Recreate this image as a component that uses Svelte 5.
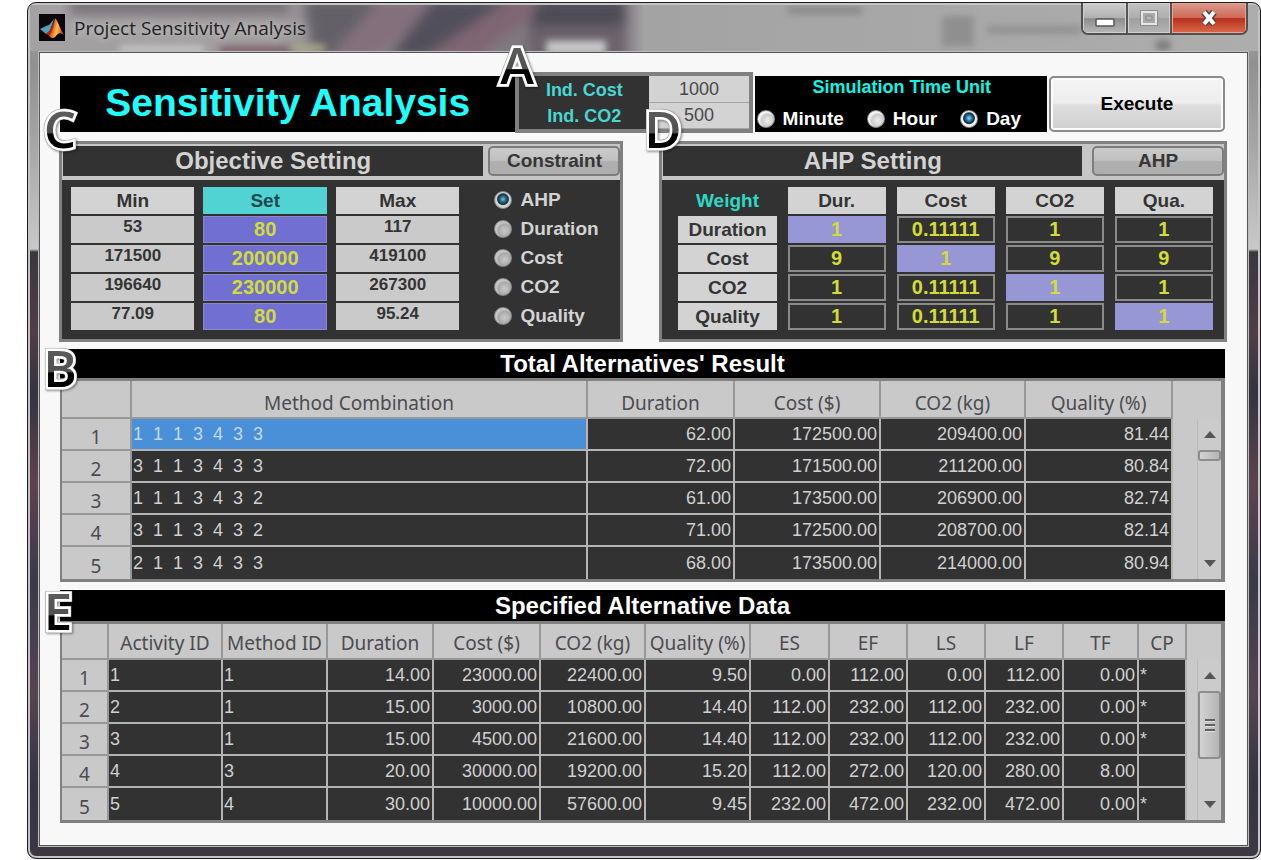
<script>
  let unit = $state('Day');
  let target = $state('AHP');
  let indCost = $state('1000');
  let indCo2 = $state('500');
  let selectedRow = $state(0);

  const units = ['Minute', 'Hour', 'Day'];
  const targets = ['AHP', 'Duration', 'Cost', 'CO2', 'Quality'];

  let objectives = $state([
    { name: 'Duration', min: '53', set: '80', max: '117' },
    { name: 'Cost', min: '171500', set: '200000', max: '419100' },
    { name: 'CO2', min: '196640', set: '230000', max: '267300' },
    { name: 'Quality', min: '77.09', set: '80', max: '95.24' }
  ]);

  const criteria = ['Dur.', 'Cost', 'CO2', 'Qua.'];
  let weights = $state([
    { name: 'Duration', values: ['1', '0.11111', '1', '1'] },
    { name: 'Cost', values: ['9', '1', '9', '9'] },
    { name: 'CO2', values: ['1', '0.11111', '1', '1'] },
    { name: 'Quality', values: ['1', '0.11111', '1', '1'] }
  ]);

  const resultColumns = [
    { title: 'Method Combination', width: 456 },
    { title: 'Duration', width: 147, num: true },
    { title: 'Cost ($)', width: 146, num: true },
    { title: 'CO2 (kg)', width: 145, num: true },
    { title: 'Quality (%)', width: 147, num: true }
  ];
  const results = [
    ['1  1  1  3  4  3  3', '62.00', '172500.00', '209400.00', '81.44'],
    ['3  1  1  3  4  3  3', '72.00', '171500.00', '211200.00', '80.84'],
    ['1  1  1  3  4  3  2', '61.00', '173500.00', '206900.00', '82.74'],
    ['3  1  1  3  4  3  2', '71.00', '172500.00', '208700.00', '82.14'],
    ['2  1  1  3  4  3  3', '68.00', '173500.00', '214000.00', '80.94']
  ];

  const detailColumns = [
    { title: 'Activity ID', width: 114 },
    { title: 'Method ID', width: 105 },
    { title: 'Duration', width: 106, num: true },
    { title: 'Cost ($)', width: 107, num: true },
    { title: 'CO2 (kg)', width: 105, num: true },
    { title: 'Quality (%)', width: 105, num: true },
    { title: 'ES', width: 79, num: true },
    { title: 'EF', width: 78, num: true },
    { title: 'LS', width: 78, num: true },
    { title: 'LF', width: 78, num: true },
    { title: 'TF', width: 75, num: true },
    { title: 'CP', width: 48 }
  ];
  const details = [
    ['1', '1', '14.00', '23000.00', '22400.00', '9.50', '0.00', '112.00', '0.00', '112.00', '0.00', '*'],
    ['2', '1', '15.00', '3000.00', '10800.00', '14.40', '112.00', '232.00', '112.00', '232.00', '0.00', '*'],
    ['3', '1', '15.00', '4500.00', '21600.00', '14.40', '112.00', '232.00', '112.00', '232.00', '0.00', '*'],
    ['4', '3', '20.00', '30000.00', '19200.00', '15.20', '112.00', '272.00', '120.00', '280.00', '8.00', ''],
    ['5', '4', '30.00', '10000.00', '57600.00', '9.45', '232.00', '472.00', '232.00', '472.00', '0.00', '*']
  ];
</script>

{#snippet callout(letter)}
  <svg class="callout callout-{letter.toLowerCase()}" width="48" height="54" viewBox="0 0 48 54">
    <defs>
      <linearGradient id="fill-{letter}" gradientUnits="userSpaceOnUse" x1="0" y1="8" x2="0" y2="46">
        <stop offset="0" stop-color="#5c5c5c" />
        <stop offset="0.6" stop-color="#505050" />
        <stop offset="0.63" stop-color="#000" />
      </linearGradient>
    </defs>
    <text class="shade" x="24" y="46" text-anchor="middle">{letter}</text>
    <text class="face" x="24" y="46" text-anchor="middle" fill="url(#fill-{letter})">{letter}</text>
  </svg>
{/snippet}

{#snippet scrollbar(tall)}
  <div class="scroll-area">
    <div class="scrollbar">
      <button class="arrow" aria-label="Scroll up">
        <svg width="12" height="7" viewBox="0 0 12 7"><path d="M0 7 6 0l6 7z" fill="#555" /></svg>
      </button>
      <div class="thumb" class:tall>
        {#if tall}
          <svg width="12" height="14" viewBox="0 0 12 14">
            <path d="M1 2h10M1 7h10M1 12h10" stroke="#606060" stroke-width="2" />
            <path d="M1 3.5h10M1 8.5h10M1 13.5h10" stroke="#ddd" />
          </svg>
        {/if}
      </div>
      <button class="arrow down" aria-label="Scroll down">
        <svg width="12" height="7" viewBox="0 0 12 7"><path d="M0 0h12L6 7z" fill="#555" /></svg>
      </button>
    </div>
  </div>
{/snippet}

{#snippet grid(columns, rows, headWidth, selectable)}
  <table class="grid">
    <colgroup>
      <col style:width="{headWidth}px" />
      {#each columns as c}<col style:width="{c.width}px" />{/each}
    </colgroup>
    <thead>
      <tr>
        <td></td>
        {#each columns as c}<th scope="col">{c.title}</th>{/each}
      </tr>
    </thead>
    <tbody>
      {#each rows as row, r}
        <tr>
          <th scope="row">{r + 1}</th>
          {#each row as cell, i}
            <td
              class:num={columns[i].num}
              class:selected={selectable && i === 0 && r === selectedRow}>{cell}</td>
          {/each}
        </tr>
      {/each}
    </tbody>
  </table>
{/snippet}

<div class="window">
  <svg class="glass" preserveAspectRatio="none" viewBox="0 0 1232 49" aria-hidden="true">
    <defs>
      <filter id="soft" x="-20%" y="-60%" width="140%" height="220%"><feGaussianBlur stdDeviation="6" /></filter>
      <filter id="softer" x="-20%" y="-60%" width="140%" height="220%"><feGaussianBlur stdDeviation="4" /></filter>
      <linearGradient id="base" x1="0" x2="1" y1="0" y2="0">
        <stop offset="0" stop-color="#a3a1a2" />
        <stop offset="0.2" stop-color="#a09c9e" />
        <stop offset="0.24" stop-color="#8b878b" />
        <stop offset="0.48" stop-color="#7a727a" />
        <stop offset="0.5" stop-color="#a3a3a3" />
        <stop offset="1" stop-color="#adadad" />
      </linearGradient>
    </defs>
    <rect width="1232" height="49" fill="url(#base)" />
    <g filter="url(#soft)">
      <rect x="40" y="-6" width="220" height="16" fill="#777076" />
      <path d="M275-5h90l-55 60h-25z" fill="#646068" />
      <path d="M350-5h70L345 55h-45z" fill="#83707c" />
      <path d="M405-5h85L440 55h-80z" fill="#514f5b" />
      <path d="M480-5h45L450 55h-55z" fill="#7f6672" />
      <path d="M510-5h86v30h-96z" fill="#4d4c57" />
      <path d="M500 22h95v32h-95z" fill="#6b626a" />
    </g>
    <g filter="url(#softer)">
      <rect x="190" y="44" width="80" height="8" fill="#7a5d69" />
      <rect x="90" y="43" width="85" height="8" fill="#c6c4c5" />
      <rect x="518" y="38" width="60" height="14" fill="#c9c9c9" />
      <rect x="262" y="42" width="34" height="8" fill="#a9ab8a" />
      <rect x="760" y="2" width="75" height="7" fill="#858585" />
      <rect x="915" y="12" width="32" height="32" fill="#8f8f8f" />
      <rect x="960" y="22" width="95" height="9" fill="#929292" />
      <rect x="1130" y="38" width="14" height="10" fill="#777" />
    </g>
  </svg>

  <header class="titlebar">
    <svg class="logo" width="26" height="27" viewBox="0 0 26 27" aria-hidden="true">
      <defs>
        <linearGradient id="peak" x1="0" x2="1" y1="0" y2="0.3">
          <stop offset="0" stop-color="#a11c10" />
          <stop offset="0.4" stop-color="#f0681b" />
          <stop offset="0.65" stop-color="#ffc04a" />
          <stop offset="1" stop-color="#d8481a" />
        </linearGradient>
      </defs>
      <rect width="26" height="27" fill="#08080c" />
      <path d="M1 15 7 12l3-1 5-6-4 12-4 3z" fill="#4f9fc0" />
      <path d="M7 20 11 16 16 5l-2 11-3 6z" fill="#a82a16" />
      <path d="M16 4c3 3 5 11 9 17-4-3-6-2-9 2-2 2-4 1-6-1 4-4 5-12 6-18z" fill="url(#peak)" />
    </svg>
    <h1>Project Sensitivity Analysis</h1>
    <div class="controls">
      <button class="min" aria-label="Minimize">
        <svg width="20" height="9" viewBox="0 0 20 9"><rect x="1" y="1" width="18" height="7" rx="1" fill="#fff" stroke="#555" stroke-width="1.5" /></svg>
      </button>
      <button class="max" aria-label="Maximize">
        <svg width="18" height="16" viewBox="0 0 18 16">
          <rect x="2" y="2" width="14" height="12" fill="none" stroke="#8d8d8d" stroke-width="4" />
          <rect x="2" y="2" width="14" height="12" fill="#aaa" stroke="#e6e6e6" stroke-width="2" />
          <rect x="6" y="6" width="6" height="4" fill="#b5b5b5" stroke="#8a8a8a" />
        </svg>
      </button>
      <button class="close" aria-label="Close">
        <svg width="20" height="18" viewBox="0 0 20 18">
          <path d="M5 3l10 12M15 3 5 15" stroke="#5b4444" stroke-width="7" />
          <path d="M5 3l10 12M15 3 5 15" stroke="#fff" stroke-width="4" />
        </svg>
      </button>
    </div>
  </header>

  <main>
    <section class="top">
      <h2>Sensitivity Analysis</h2>
      <div class="indirect">
        {@render callout('A')}
        <label for="ind-cost">Ind. Cost</label>
        <input id="ind-cost" bind:value={indCost} />
        <label for="ind-co2">Ind. CO2</label>
        <input id="ind-co2" bind:value={indCo2} />
      </div>
      <fieldset class="units">
        <legend>Simulation Time Unit</legend>
        <div class="options">
          {#each units as u}
            <label><input type="radio" name="unit" value={u} bind:group={unit} />{u}</label>
          {/each}
        </div>
      </fieldset>
      <button class="execute">Execute</button>
    </section>

    <div class="panels">
      <section class="panel objective">
        {@render callout('C')}
        <div class="panel-head">
          <h3>Objective Setting</h3>
          <button>Constraint</button>
        </div>
        <div class="panel-body">
          <table class="settings">
            <thead>
              <tr><th scope="col">Min</th><th scope="col" class="set">Set</th><th scope="col">Max</th></tr>
            </thead>
            <tbody>
              {#each objectives as o}
                <tr>
                  <td class="bound">{o.min}</td>
                  <td><input class="goal" aria-label="{o.name} target" bind:value={o.set} /></td>
                  <td class="bound">{o.max}</td>
                </tr>
              {/each}
            </tbody>
          </table>
          <div class="targets" role="radiogroup" aria-label="Objective">
            {#each targets as t}
              <label><input type="radio" name="target" value={t} bind:group={target} />{t}</label>
            {/each}
          </div>
        </div>
      </section>

      <section class="panel ahp">
        {@render callout('D')}
        <div class="panel-head">
          <h3>AHP Setting</h3>
          <button>AHP</button>
        </div>
        <div class="panel-body">
          <table class="settings">
            <thead>
              <tr>
                <th scope="col" class="corner">Weight</th>
                {#each criteria as c}<th scope="col">{c}</th>{/each}
              </tr>
            </thead>
            <tbody>
              {#each weights as w, r}
                <tr>
                  <th scope="row">{w.name}</th>
                  {#each w.values as _, c}
                    <td>
                      <input class="weight" class:diagonal={r === c} aria-label="{w.name} against {criteria[c]}" bind:value={w.values[c]} />
                    </td>
                  {/each}
                </tr>
              {/each}
            </tbody>
          </table>
        </div>
      </section>
    </div>

    <section class="data results">
      {@render callout('B')}
      <h3>Total Alternatives' Result</h3>
      <div class="frame">
        {@render grid(resultColumns, results, 70, true)}
        {@render scrollbar(false)}
      </div>
    </section>

    <section class="data details">
      {@render callout('E')}
      <h3>Specified Alternative Data</h3>
      <div class="frame">
        {@render grid(detailColumns, details, 47, false)}
        {@render scrollbar(true)}
      </div>
    </section>
  </main>
</div>

<style>
  :global(body) {
    background: #fff;
  }

  .window,
  .window :global(*) {
    box-sizing: border-box;
  }

  .window {
    position: relative;
    margin: 2px 0 0 27px;
    padding: 0 12px 12px 11px;
    border: 1px solid #1c1c1c;
    border-radius: 9px;
    font-family: 'Liberation Sans', Arial, sans-serif;
    overflow: hidden;
    background: linear-gradient(#b0b0b0 0, #909090 60px, #a5a5a5 140px, #c9c9c9 246px, #3a373f 249px, #4f3e48 330px, #34343d 390px, #5c434f 480px, #3a3a48 580px, #544550 690px, #35353f 780px, #3d3844 100%);
    box-shadow: inset 0 0 0 2px #c4c4c4;
  }

  h1, h2, h3 {
    margin: 0;
  }

  button, input {
    font-family: inherit;
    margin: 0;
    padding: 0;
  }

  .glass {
    position: absolute;
    left: 2px;
    top: 2px;
    width: calc(100% - 4px);
    height: 46px;
  }

  .titlebar {
    position: relative;
    display: flex;
    align-items: center;
    height: 49px;
  }

  .logo {
    flex: none;
  }

  h1 {
    flex: 1;
    padding-left: 9px;
    font: 400 19px/24px 'Open Sans', sans-serif;
    color: #222;
    text-shadow: 0 0 8px #ddd;
  }

  .controls {
    display: flex;
    align-self: flex-start;
    height: 32px;
    border: 2px solid #4f4f4f;
    border-top: 0;
    border-radius: 0 0 7px 7px;
    overflow: hidden;
  }

  .controls button {
    display: grid;
    place-items: center;
    border: 0;
    border-right: 2px solid #555;
    box-shadow: inset 0 0 0 1px #d0d0d0;
    background: linear-gradient(#cfcfcf, #b0b0b0 50%, #8c8c8c 52%, #b8b8b8);
  }

  .controls .min {
    width: 45px;
    padding-top: 8px;
  }

  .controls .max {
    width: 44px;
    background: linear-gradient(#c2c2c2, #adadad 50%, #9e9e9e 52%, #b4b4b4);
  }

  .controls .close {
    width: 74px;
    border-right: 0;
    box-shadow: inset 0 0 0 1px #e9a397;
    background: linear-gradient(#dc9a8d, #cf6a57 48%, #b8301c 52%, #dc6a4c);
  }

  main {
    padding: 23px 20px 22px 19px;
    border: 1px solid #555;
    outline: 1px solid #bdbdbd;
    background: #f8f8f8;
    position: relative;
  }

  .top {
    display: flex;
    height: 56px;
    margin: 0 2px 0 1px;
  }

  h2 {
    flex: 455 1 0;
    min-width: 0;
    background: #000;
    color: #20fdfd;
    font-size: 39px;
    line-height: 54px;
    text-align: center;
    white-space: nowrap;
  }

  .indirect {
    position: relative;
    flex: 229 1 0;
    min-width: 0;
    margin: -4px 2px -1px 0;
    border: 4px solid #808080;
    background: #323232;
    display: grid;
    grid-template-columns: 131fr 100fr;
    grid-template-rows: 27px 26px;
    align-items: center;
  }

  .indirect label {
    color: #48d6d0;
    font-size: 18px;
    line-height: 26px;
    font-weight: 700;
    text-align: center;
  }

  .indirect input {
    min-width: 0;
    width: 100%;
    height: 100%;
    border: 0;
    border-bottom: 1px solid #a4a4a4;
    background: #d3d3d3;
    color: #484848;
    font-size: 18px;
    text-align: center;
  }

  .units {
    flex: 290 1 0;
    min-width: 0;
    margin: 0 2px 0 0;
    padding: 0 0 0 2px;
    border: 0;
    background: #000;
    color: #fff;
  }

  .units legend {
    float: left;
    width: 100%;
    padding: 0;
    color: #12f5e4;
    font-size: 18px;
    font-weight: 700;
    line-height: 22px;
    text-align: center;
  }

  .options {
    clear: both;
    display: flex;
    gap: 23px;
    padding-top: 10px;
  }

  .options label,
  .targets label {
    display: flex;
    align-items: center;
    font-size: 19px;
    line-height: 22px;
    font-weight: 700;
  }

  .options input,
  .targets input {
    appearance: none;
    flex: none;
    width: 18px;
    height: 18px;
    margin-right: 8px;
    border-radius: 50%;
    border: 1px solid #8a8a8a;
    background: radial-gradient(circle at 60% 60%, #eee 0, #d4d4d4 35%, #c9c9c9 45%, #f2f2f2 60%, #fff 100%);
  }

  .options input:checked {
    background: radial-gradient(circle at 50% 45%, #8fd8f2 0, #2f84ab 22%, #12344f 40%, #1b3f5a 46%, #f4f4f4 54%);
  }

  .targets input {
    background: radial-gradient(circle at 60% 60%, #c8c8c8 0, #b2b2b2 35%, #a6a6a6 45%, #c4c4c4 60%, #cfcfcf 100%);
  }

  .targets input:checked {
    background: radial-gradient(circle at 50% 45%, #80bcc8 0, #2c7488 22%, #173a4a 40%, #24424f 46%, #d2d2d2 54%);
  }

  .execute {
    flex: 172 1 0;
    border: 2px solid #8b8b8b;
    border-radius: 5px;
    box-shadow: inset 0 0 0 2px #fbfbfb;
    background: linear-gradient(#f4f4f4, #ededed 48%, #dedede 52%, #d0d0d0);
    color: #000;
    font-size: 19px;
    font-weight: 700;
  }

  .panels {
    display: grid;
    grid-template-columns: 564fr 567fr;
    gap: 36px;
    margin-top: 9px;
  }

  .panel {
    position: relative;
    min-width: 0;
    border: 3px solid #808080;
    background: #323232;
  }

  .panel-head {
    display: flex;
    gap: 5px;
    height: 36px;
    padding: 2px 0 4px 1px;
    background: #c6c6c6;
  }

  .ahp .panel-head {
    gap: 10px;
  }

  .panel-head h3 {
    flex: 1;
    background: #323232;
    color: #d3d3d3;
    font-size: 24px;
    line-height: 30px;
    text-align: center;
  }

  .panel-head button {
    width: 132px;
    border: 2px solid #7d7d7d;
    border-radius: 5px;
    background: linear-gradient(#cbcbcb, #c0c0c0 48%, #b0b0b0 52%, #adadad);
    color: #363636;
    font-size: 19px;
    font-weight: 700;
  }

  .panel-body {
    display: flex;
    padding: 5px 0 7px;
  }

  .ahp .panel-body {
    padding-left: 5px;
  }

  .settings {
    flex: 1;
    min-width: 0;
    width: 100%;
    table-layout: fixed;
    border-collapse: separate;
    border-spacing: 9px 2px;
  }

  .ahp .settings {
    border-spacing: 11px 2px;
  }

  .settings th,
  .settings td {
    height: 27px;
    padding: 0;
    background: #d3d3d3;
    color: #343434;
    font-size: 19px;
    line-height: 26px;
    font-weight: 700;
    text-align: center;
  }

  .settings .set {
    background: #52d3d3;
    color: #1d4a4e;
  }

  .settings .bound {
    background: #cacaca;
    font-size: 17px;
    line-height: 22px;
    vertical-align: top;
  }

  .settings .corner {
    background: none;
    color: #2ed8c4;
  }

  .settings input {
    display: block;
    width: 100%;
    height: 27px;
    border: 2px solid #8a8a8a;
    border-radius: 0;
    background: #323232;
    color: #d3dc37;
    font-size: 20px;
    font-weight: 700;
    text-align: center;
  }

  .settings .goal {
    border: 1px solid #8a8ac8;
    background: #716fd2;
  }

  .settings .diagonal {
    border-color: #9797d6;
    background: #9797d6;
  }

  .targets {
    display: flex;
    flex-direction: column;
    gap: 7px;
    width: 152px;
    padding: 4px 0 0 26px;
    color: #d3d3d3;
  }

  .data {
    position: relative;
    margin: 7px 2px 0 1px;
  }

  .details {
    margin-top: 8px;
  }

  .data h3 {
    background: #000;
    color: #fff;
    font-size: 24px;
    line-height: 29px;
    text-align: center;
  }

  .details h3 {
    line-height: 31px;
  }

  .frame {
    display: flex;
    border: 3px solid #808080;
    border-right-width: 4px;
    border-left-width: 2px;
    background: #c9c9c9;
  }

  .grid {
    flex: 1;
    min-width: 0;
    table-layout: fixed;
    border-collapse: separate;
    border-spacing: 0;
  }

  .grid th,
  .grid thead td {
    padding: 0;
    border-right: 2px solid #989898;
    border-bottom: 2px solid #989898;
    background: #c9c9c9;
    color: #4c4c50;
    font: 400 19px/24px 'Noto Sans', sans-serif;
    text-align: center;
    white-space: nowrap;
  }

  .grid thead th,
  .grid thead td {
    height: 38px;
    padding-top: 8px;
  }

  .details .grid thead th,
  .details .grid thead td {
    height: 36px;
    padding-top: 4px;
  }

  .grid tbody th {
    height: 32px;
    padding-top: 6px;
  }

  .grid tbody td {
    padding: 0 2px 0 1px;
    border-right: 2px solid #b4b4b4;
    border-bottom: 2px solid #b4b4b4;
    background: #323232;
    color: #d0d0d0;
    font-size: 18px;
    line-height: 30px;
    white-space: pre;
  }

  .grid tbody tr:last-child > * {
    border-bottom: 0;
  }

  .grid .num {
    text-align: right;
  }

  .grid tbody .selected {
    background: #4a90d9;
    color: #c4d8ea;
  }

  .scroll-area {
    display: flex;
    justify-content: flex-end;
    width: 48px;
    padding-top: 38px;
  }

  .details .scroll-area {
    width: 34px;
    padding-top: 36px;
  }

  .scrollbar {
    display: flex;
    flex-direction: column;
    width: 24px;
    border-left: 1px solid #bababa;
    background: #cbcbcb;
  }

  .arrow {
    display: grid;
    place-items: center;
    height: 31px;
    border: 0;
    background: none;
  }

  .arrow.down {
    margin-top: auto;
  }

  .thumb {
    display: grid;
    place-items: center;
    height: 11px;
    border: 2px solid #8d8d8d;
    border-radius: 3px;
    background: linear-gradient(90deg, #d3d3d3, #b4b4b4);
  }

  .thumb.tall {
    height: 68px;
  }

  .callout {
    position: absolute;
    z-index: 2;
    font-family: 'Open Sans', sans-serif;
    font-size: 51px;
    font-weight: 600;
    overflow: visible;
    filter: drop-shadow(1px 1px 1px #0006);
  }

  .callout .shade {
    fill: none;
    stroke: #999;
    stroke-width: 6;
    stroke-linejoin: miter;
    stroke-miterlimit: 3;
  }

  .callout .face {
    stroke: #fff;
    stroke-width: 5;
    stroke-miterlimit: 3;
    paint-order: stroke;
  }

  .callout-a {
    left: -26px;
    top: -38px;
  }

  .callout-c {
    left: -26px;
    top: -42px;
  }

  .callout-d {
    left: -23px;
    top: -42px;
  }

  .callout-b,
  .callout-e {
    left: -24px;
    top: -8px;
  }

  .callout-e {
    left: -26px;
    top: -6px;
  }
</style>
